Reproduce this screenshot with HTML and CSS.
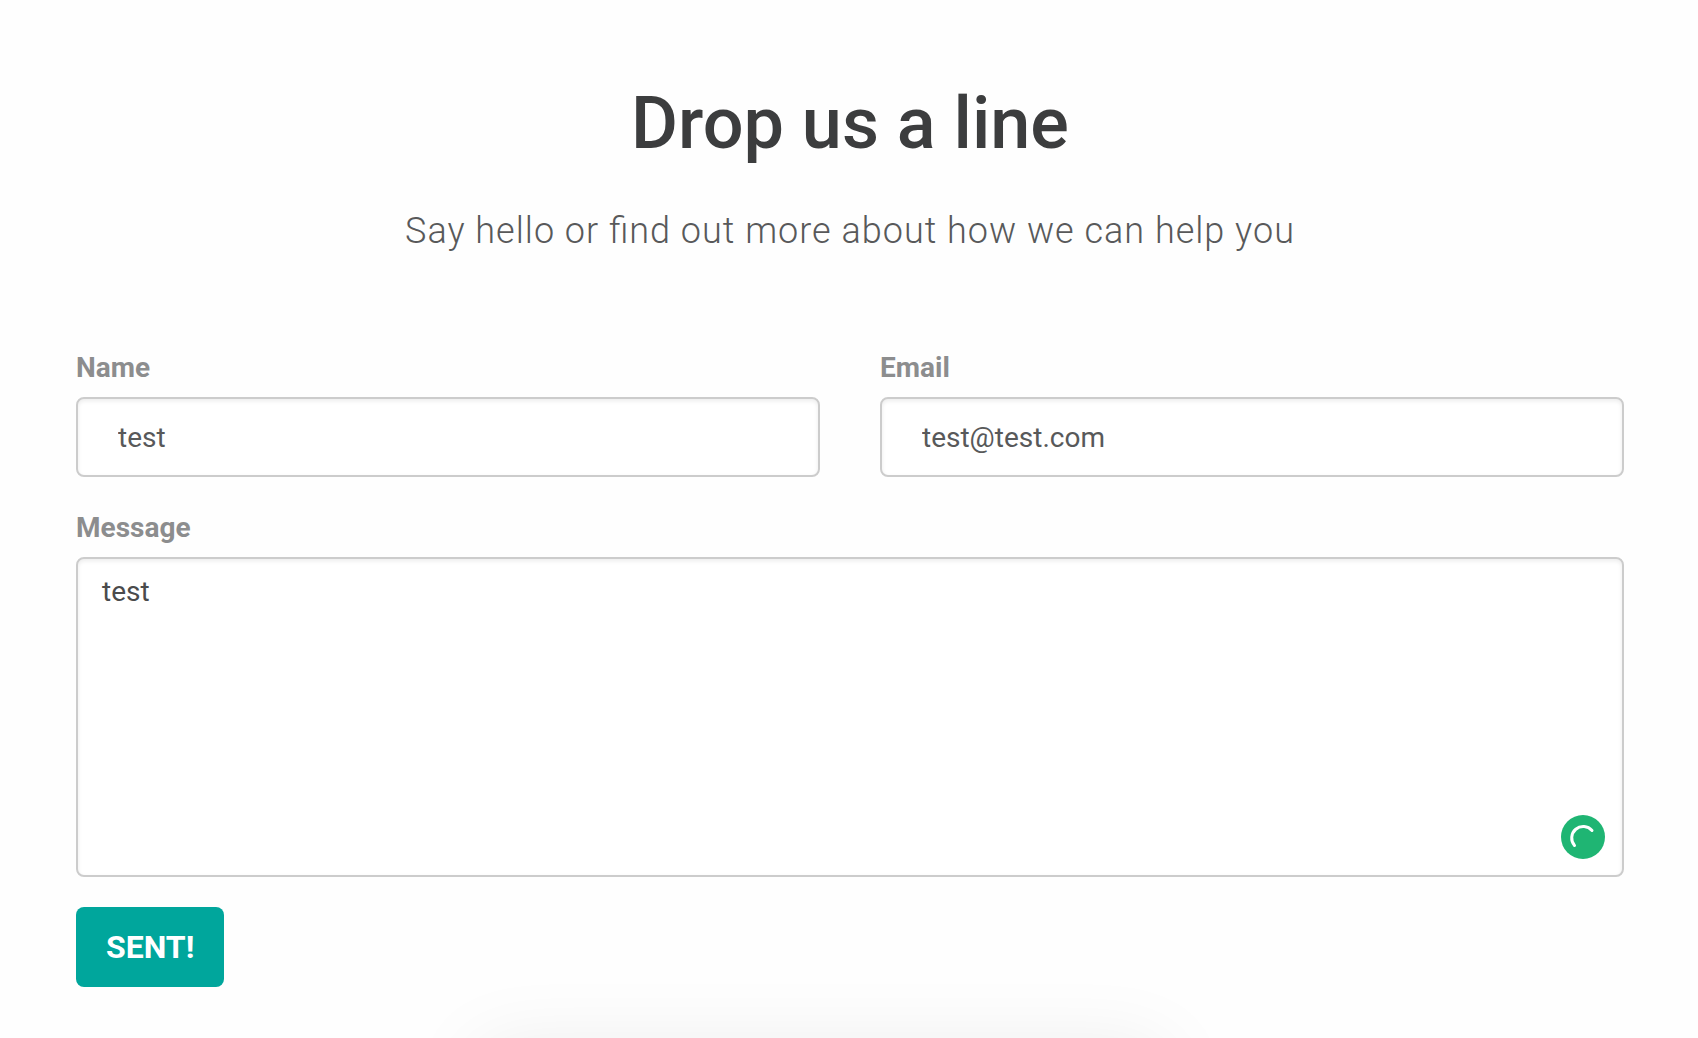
FILE: index.html
```html
<!DOCTYPE html>
<html lang="en">
<head>
    <meta charset="UTF-8">
    <meta name="viewport" content="width=device-width, initial-scale=1.0">
    <title>Drop us a line</title>
    <link rel="stylesheet" href="styles.css">
</head>
<body>
    <section class="contact">
        <div class="header">
            <h1>Drop us a line</h1>
            <p>Say hello or find out more about how we can help you</p>
        </div>
        <form class="contact-form">
            <div class="row">
                <div class="field">
                    <label for="name">Name</label>
                    <input type="text" id="name" name="name" value="test">
                </div>
                <div class="field">
                    <label for="email">Email</label>
                    <input type="email" id="email" name="email" value="test@test.com">
                </div>
            </div>
            <div class="field message">
                <label for="message">Message</label>
                <textarea id="message" name="message" spellcheck="false">test</textarea>
                <svg class="spinner" viewBox="0 0 44 44" aria-hidden="true">
                    <circle cx="22" cy="22" r="22" fill="#1fb573"/>
                    <path d="M13.5 30.5A11.5 11.5 0 0 1 31 15.5" fill="none" stroke="#fff" stroke-width="3" stroke-linecap="round"/>
                </svg>
            </div>
            <button type="button" class="send-button">SENT!</button>
        </form>
    </section>
    <div class="bottom-shadow"></div>
</body>
</html>
```
FILE: styles.css
```css
* {
    box-sizing: border-box;
}
body {
    display: flex;
    flex-direction: column;
    min-height: 100vh;
    font-family: Roboto, Arial, sans-serif;
    background-color: #fefefe;
    color: #3c3d3e;
    margin: 0;
    overflow: hidden;
}
.contact {
    padding: 81px 74px 40px 76px;
}
.header {
    text-align: center;
}
.header h1 {
    margin: 0;
    font-size: 72px;
    font-weight: 500;
    line-height: 86px;
}
.header p {
    margin: 40px 0 92px;
    font-size: 36px;
    font-weight: 300;
    line-height: 48px;
    letter-spacing: 1px;
    font-feature-settings: "liga";
    color: #58595a;
}
.row {
    display: grid;
    grid-template-columns: 1fr 1fr;
    gap: 60px;
}
.field {
    display: flex;
    flex-direction: column;
    margin-bottom: 30px;
}
.field label {
    margin-bottom: 9px;
    font-size: 28px;
    font-weight: 700;
    line-height: 41px;
    color: #8c8d8e;
}
.field input,
.field textarea {
    width: 100%;
    border: 2px solid #ccc;
    border-radius: 8px;
    background-color: #fff;
    box-shadow: inset 0 2px 4px rgba(0, 0, 0, 0.08);
    font-family: inherit;
    font-size: 28px;
    line-height: 40px;
    color: #58595a;
    outline: none;
}
.field input {
    height: 80px;
    padding: 0 40px;
}
.field textarea {
    height: 320px;
    padding: 13px 24px;
    color: #4a4b4c;
    resize: none;
}
.message {
    position: relative;
}
.spinner {
    position: absolute;
    right: 19px;
    bottom: 18px;
    width: 44px;
    height: 44px;
}
.send-button {
    display: block;
    height: 80px;
    padding: 0 30px;
    border: none;
    border-radius: 8px;
    background-color: #00a69c;
    color: #fff;
    font-family: inherit;
    font-size: 32px;
    font-weight: 700;
    cursor: pointer;
}
/* soft shadow rising from the bottom edge */
.bottom-shadow {
    width: 32%;
    height: 0;
    margin: auto auto 0;
    box-shadow: -28px 80px 80px 70px rgba(0, 0, 0, 0.08);
}
```
